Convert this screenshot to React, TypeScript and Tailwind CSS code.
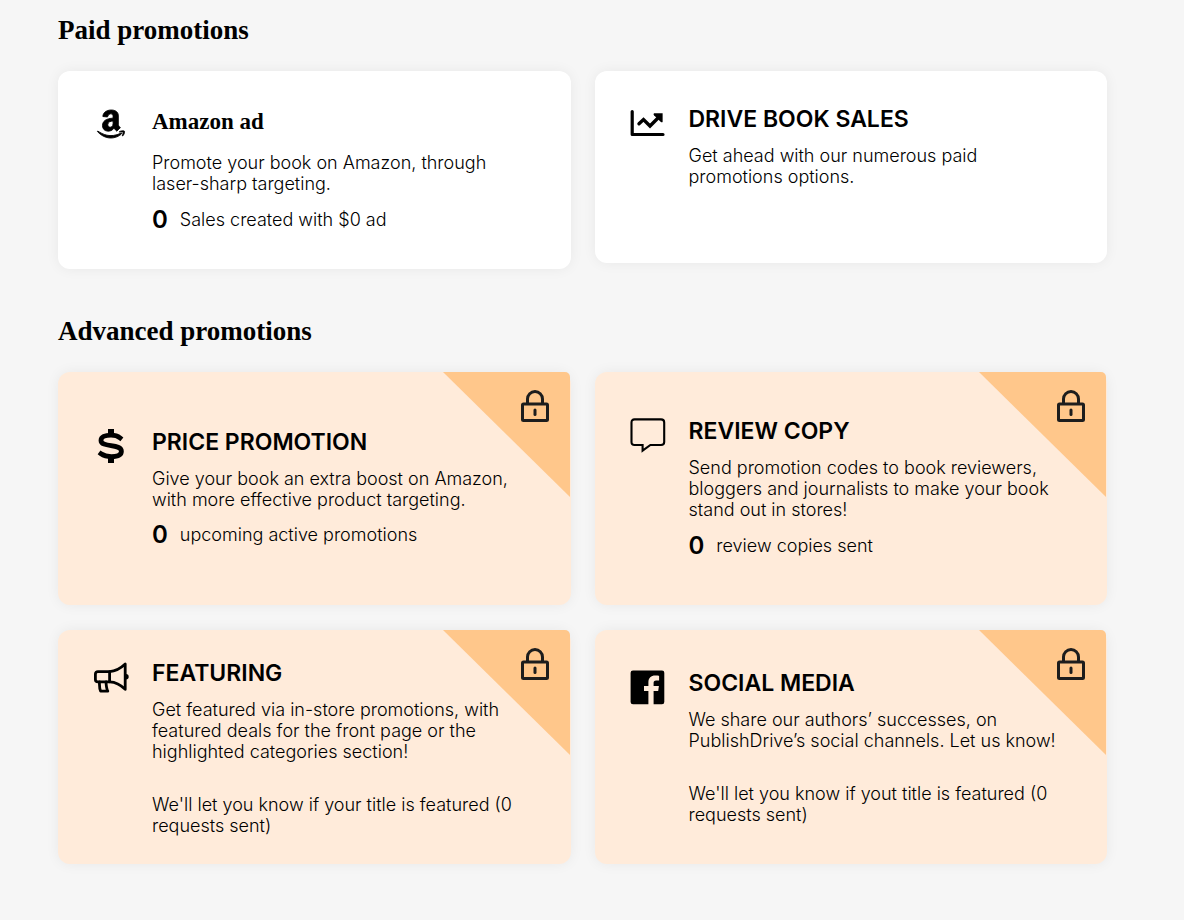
import type { ReactNode } from "react";
import { FaAmazon } from "react-icons/fa";

function AmazonIcon() {
  return (
    <span className="pr-0.5 pb-1">
      <FaAmazon className="size-8 overflow-visible" stroke="#000" strokeWidth="14" aria-hidden="true" />
    </span>
  );
}

function ChartIcon() {
  return (
    <svg viewBox="1 0 36 36" className="size-9 overflow-visible" aria-hidden="true">
      <path d="M2.2 6.5V29.5H33" fill="none" stroke="#000" strokeWidth="3.2" strokeLinecap="round" strokeLinejoin="round" />
      <path d="M9 18.8L13.5 14.6L20 21L28.5 12.5" fill="none" stroke="#000" strokeWidth="3.4" strokeLinecap="round" strokeLinejoin="miter" />
      <path d="M24 8.2H32.6V17Q31.8 17.8 30.6 16.8L24 10.2Q23 9 24 8.2Z" fill="#000" />
    </svg>
  );
}

function DollarIcon() {
  return (
    <svg viewBox="0 0 36 36" className="size-9" fill="none" stroke="#000" aria-hidden="true">
      <path d="M17 1V7M17 29V35" strokeWidth="6" />
      <path
        d="M26 9.8C23.6 7.9 20.2 7.2 17 7.2C11 7.2 7 8.9 7 12.4C7 20 27.4 15.2 27.4 23.2C27.4 27 23.4 28.6 17.4 28.6C13.4 28.6 9.8 27.8 7 25.8"
        strokeWidth="4.8"
        strokeLinecap="square"
      />
    </svg>
  );
}

function ChatIcon() {
  return (
    <svg viewBox="1 0 36 36" className="size-9 overflow-visible" aria-hidden="true">
      <path
        d="M4.5 2.4H31Q34.2 2.4 34.2 5.4V25Q34.2 28 31 28H20.4L12.6 33.6V28H4.5Q1.5 28 1.5 25V5.4Q1.5 2.4 4.5 2.4Z"
        fill="none"
        stroke="#000"
        strokeWidth="2.1"
        strokeLinejoin="miter"
      />
    </svg>
  );
}

function MegaphoneIcon() {
  return (
    <svg viewBox="0 0 36 36" className="size-9 overflow-visible" fill="none" stroke="#000" strokeWidth="2.8" strokeLinejoin="round" strokeLinecap="round" aria-hidden="true">
      <path d="M15.6 12.6H4Q1.4 12.6 1.4 15V20.4Q1.4 22.8 4 22.8H15.6Z" />
      <path d="M15.6 12.6C22 12.2 27 9 31.2 5V30.4C27 26 22 23 15.6 22.8" />
      <path d="M5.4 23C5.6 26.5 5.2 29.5 6.6 32.2H13.8C12.4 29.6 12.2 26.6 12 23" />
      <path d="M32 15A2.7 2.7 0 0 1 32 20.4Z" fill="#000" stroke="none" />
    </svg>
  );
}

function FacebookIcon() {
  return (
    <svg viewBox="1 0 36 36" className="size-9 overflow-visible" aria-hidden="true">
      <path
        d="M3 1.5H32Q34.3 1.5 34.3 3.8V33Q34.3 35.3 32 35.3H23.6V22.1H28.2L28.9 17H23.6V13.8C23.6 12.3 24.1 11.4 26.2 11.4H29.1V6.7C28.5 6.6 26.9 6.5 25.1 6.5C21.2 6.5 18.4 8.9 18.4 13.2V17H14V22.1H18.4V35.3H3Q.6 35.3.6 33V3.8Q.6 1.5 3 1.5Z"
        fill="#000"
      />
    </svg>
  );
}

function LockedCorner() {
  return (
    <div className="absolute top-0 right-px h-[125px] w-[127px] overflow-hidden rounded-tr-[5px]">
      <svg viewBox="0 0 127 125" className="size-full" role="img" aria-label="Locked">
        <path d="M0 0H127V125Z" fill="#ffc78b" />
        <g fill="none" stroke="#1d1d1d" strokeWidth="3" strokeLinecap="round" strokeLinejoin="round">
          <rect x="79.5" y="32" width="25" height="16.5" rx="1" />
          <path d="M84.5 31V27A7.5 7.5 0 0 1 99.5 27V31" />
          <path d="M92 38V42.5" />
        </g>
      </svg>
    </div>
  );
}

type CardProps = {
  icon: ReactNode;
  title: string;
  serif?: boolean;
  lines: string[];
  stat?: string;
  note?: string[];
  locked?: boolean;
  className?: string;
};

function Lines({ lines }: { lines: string[] }) {
  return (
    <>
      {lines.map((line) => (
        <span key={line} className="block whitespace-nowrap">
          {line}{" "}
        </span>
      ))}
    </>
  );
}

function Card({ icon, title, serif, lines, stat, note, locked, className }: CardProps) {
  return (
    <article
      className={`relative flex rounded-xl px-9 shadow-[0_0_14px_rgba(0,0,0,0.06)] ${locked ? "items-center bg-[#ffebda]" : "bg-white"} ${className ?? ""}`}
    >
      {locked && <LockedCorner />}
      <div className="relative flex gap-[22px]">
        <div className="flex size-9 shrink-0 items-center justify-center">{icon}</div>
        <div className="text-[18px] leading-[21px] font-light">
          {serif ? (
            <h3 className="mb-4 font-['Liberation_Serif',serif] text-[23px] leading-7 font-bold">{title}</h3>
          ) : (
            <h3 className="mb-3 text-[23px] leading-7 font-semibold">{title}</h3>
          )}
          <p>
            <Lines lines={lines} />
          </p>
          {stat && (
            <p className="mt-2.5 flex h-[30px] items-center gap-3">
              <span className="text-[24px] font-semibold">0</span>
              <span>{stat}</span>
            </p>
          )}
          {note && (
            <p className="mt-8">
              <Lines lines={note} />
            </p>
          )}
        </div>
      </div>
    </article>
  );
}

export default function App() {
  return (
    <main className="min-h-screen bg-[#f6f6f6] pt-3 pr-[77px] pb-14 pl-[58px] font-['Inter',sans-serif] text-black">
      <section>
        <h2 className="font-['Liberation_Serif',serif] text-[27px] leading-9 font-bold">Paid promotions</h2>
        <div className="mt-[23px] grid grid-cols-2 items-start gap-6">
          <Card
            className="min-h-[198px] pt-[37px]"
            icon={<AmazonIcon />}
            title="Amazon ad"
            serif
            lines={["Promote your book on Amazon, through", "laser-sharp targeting."]}
            stat="Sales created with $0 ad"
          />
          <Card
            className="min-h-48 pt-[34px]"
            icon={<ChartIcon />}
            title="DRIVE BOOK SALES"
            lines={["Get ahead with our numerous paid", "promotions options."]}
          />
        </div>
      </section>
      <section className="mt-11">
        <h2 className="font-['Liberation_Serif',serif] text-[27px] leading-9 font-bold">Advanced promotions</h2>
        <div className="mt-[23px] grid grid-cols-2 gap-x-6 gap-y-[25px]">
          <Card
            locked
            className="min-h-[233px]"
            icon={<DollarIcon />}
            title="PRICE PROMOTION"
            lines={["Give your book an extra boost on Amazon,", "with more effective product targeting."]}
            stat="upcoming active promotions"
          />
          <Card
            locked
            className="min-h-[233px]"
            icon={<ChatIcon />}
            title="REVIEW COPY"
            lines={[
              "Send promotion codes to book reviewers,",
              "bloggers and journalists to make your book",
              "stand out in stores!",
            ]}
            stat="review copies sent"
          />
          <Card
            locked
            className="min-h-[234px]"
            icon={<MegaphoneIcon />}
            title="FEATURING"
            lines={[
              "Get featured via in-store promotions, with",
              "featured deals for the front page or the",
              "highlighted categories section!",
            ]}
            note={["We'll let you know if your title is featured (0", "requests sent)"]}
          />
          <Card
            locked
            className="min-h-[234px]"
            icon={<FacebookIcon />}
            title="SOCIAL MEDIA"
            lines={["We share our authors’ successes, on", "PublishDrive’s social channels. Let us know!"]}
            note={["We'll let you know if yout title is featured (0", "requests sent)"]}
          />
        </div>
      </section>
    </main>
  );
}
